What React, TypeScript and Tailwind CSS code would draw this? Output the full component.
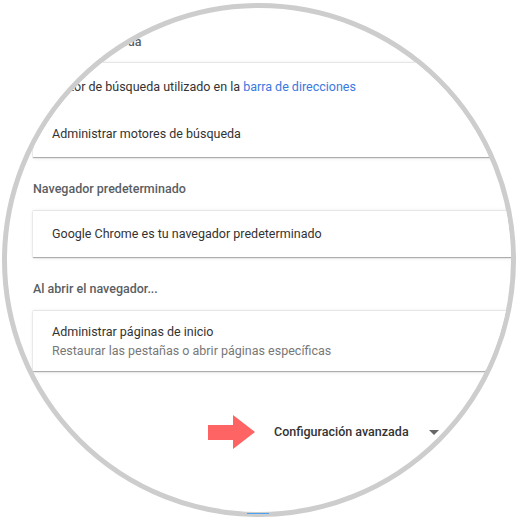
import React from 'react';

const font = { fontFamily: 'Roboto, "Liberation Sans", sans-serif' };

const SectionTitle: React.FC<{ children: React.ReactNode; className?: string }> = ({ children, className }) => (
  <div className={`h-5 leading-5 text-[12.5px] font-medium text-[#5a5e63] ${className ?? ''}`}>{children}</div>
);

const Card: React.FC<{ children: React.ReactNode; className?: string }> = ({ children, className }) => (
  <div
    className={`w-[500px] shrink-0 bg-white border-t border-[#e6e6e6] shadow-[0_1px_1px_rgba(0,0,0,0.28),0_1px_4px_rgba(0,0,0,0.1)] ${className ?? ''}`}
  >
    {children}
  </div>
);

export default function App() {
  return (
    <div className="relative w-[520px] h-[520px] bg-white overflow-hidden" style={font}>
      {/* circular crop */}
      <div className="ml-[2px] mt-[3px] w-[514px] h-[514px] rounded-full border-[5px] border-[#cdcdcd] overflow-hidden bg-white">
        <div className="flex flex-col pl-[26px] pt-[24px] text-[12.5px] text-[#333333]">
          <SectionTitle>Motor de búsqueda</SectionTitle>

          <Card className="mt-[10px]">
            <div className="h-[48px] flex items-center pl-[19px]">
              Motor de búsqueda utilizado en la&nbsp;
              <span className="text-[#3b78e0]">barra de direcciones</span>
            </div>
            <div className="h-[46px] flex items-center pl-[19px]">Administrar motores de búsqueda</div>
          </Card>

          <SectionTitle className="mt-[22px]">Navegador predeterminado</SectionTitle>

          <Card className="mt-[11px]">
            <div className="h-[46px] flex items-center pl-[19px]">Google Chrome es tu navegador predeterminado</div>
          </Card>

          <SectionTitle className="mt-[22px]">Al abrir el navegador...</SectionTitle>

          <Card className="mt-[11px]">
            <div className="h-[60px] flex flex-col justify-center pl-[19px] leading-[19px]">
              <span>Administrar páginas de inicio</span>
              <span className="text-[#777777]">Restaurar las pestañas o abrir páginas específicas</span>
            </div>
          </Card>

          <div className="mt-[44px] h-[34px] flex items-center">
            <svg width="48" height="35" viewBox="0 0 48 35" className="ml-[175px] shrink-0">
              <polygon points="0,10 25,10 25,0 47,17 25,34 25,25 0,25" fill="#ff6464" />
            </svg>
            <span className="ml-[18px] font-medium text-[#333333]">Configuración avanzada</span>
            <svg width="10" height="6" viewBox="0 0 10 6" className="ml-[20px] mt-[2px]">
              <polygon points="0,0 10,0 5,5" fill="#666666" />
            </svg>
          </div>
        </div>
      </div>
      <div className="absolute left-[247px] top-[513px] w-[22px] h-[1px] bg-[#4aa3f0]" />
    </div>
  );
}
